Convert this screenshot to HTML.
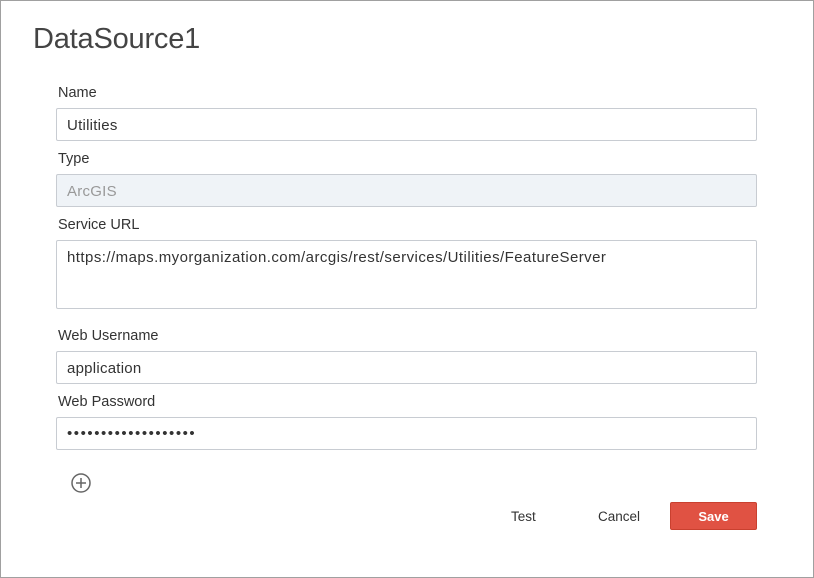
<!DOCTYPE html>
<html><head><style>
body{margin:0;width:814px;height:578px;background:#fff;font-family:"Liberation Sans",sans-serif;overflow:hidden}
.frame{position:absolute;left:0;top:0;width:812px;height:576px;border:1px solid #a0a0a0}
.t{position:absolute;left:33px;top:23px;font-size:29px;color:#444;letter-spacing:-0.2px}
.l{position:absolute;left:58px;font-size:14.5px;color:#333}
.i{position:absolute;left:56px;width:699px;height:31px;border:1px solid #c8ccd2;border-radius:2px;font-size:15px;color:#333;box-sizing:content-box}
.i span{position:absolute;left:10px;top:8px;letter-spacing:0.25px}
.b{position:absolute;font-size:13.5px;color:#333}
</style></head><body>
<div class="frame"></div>
<div class="t">DataSource1</div>
<div class="l" style="top:85px">Name</div>
<div class="i" style="top:108px"><span>Utilities</span></div>
<div class="l" style="top:151px">Type</div>
<div class="i" style="top:174px;background:#eff3f7"><span style="color:#999">ArcGIS</span></div>
<div class="l" style="top:217px">Service URL</div>
<div class="i" style="top:240px;height:67px"><span style="top:8px;letter-spacing:0.45px">https://maps.myorganization.com/arcgis/rest/services/Utilities/FeatureServer</span></div>
<div class="l" style="top:328px">Web Username</div>
<div class="i" style="top:351px"><span>application</span></div>
<div class="l" style="top:394px">Web Password</div>
<div class="i" style="top:417px"><span style="top:7px;font-size:15px;letter-spacing:1.55px">•••••••••••••••••••</span></div>
<svg style="position:absolute;left:71px;top:473px" width="20" height="20" viewBox="0 0 20 20"><circle cx="10" cy="10" r="9" fill="none" stroke="#666" stroke-width="1.5"/><path d="M10 5v10M5 10h10" stroke="#666" stroke-width="1.5"/></svg>
<div class="b" style="left:511px;top:509px">Test</div>
<div class="b" style="left:598px;top:509px">Cancel</div>
<div style="position:absolute;left:670px;top:502px;width:87px;height:28px;background:#e05243;border:1px solid #c9402f;box-sizing:border-box;border-radius:2px;color:#fff;font-size:13px;font-weight:700;text-align:center;line-height:28px">Save</div>
</body></html>
